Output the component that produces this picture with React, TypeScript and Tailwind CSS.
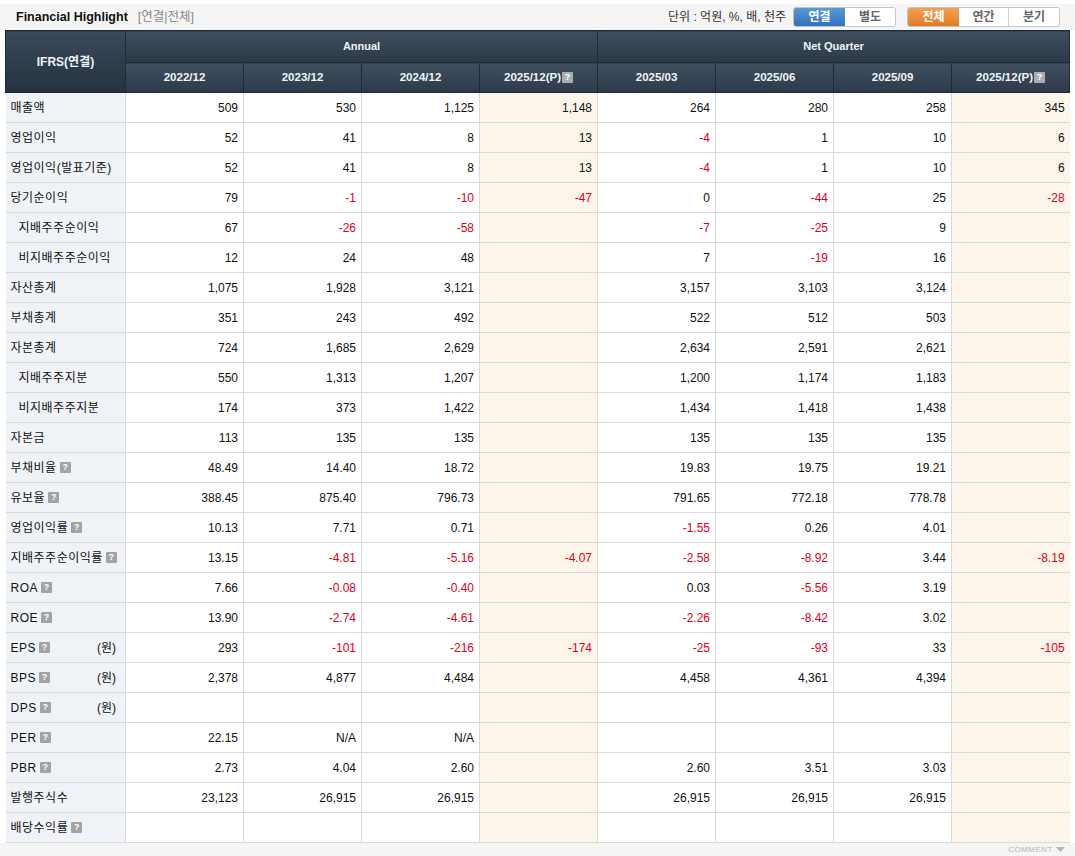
import React from "react";

type Row = {
  label: string;
  indent?: boolean;
  help?: boolean;
  unit?: string;
  values: string[];
};

const rows: Row[] = [
  { label: "매출액", values: ["509", "530", "1,125", "1,148", "264", "280", "258", "345"] },
  { label: "영업이익", values: ["52", "41", "8", "13", "-4", "1", "10", "6"] },
  { label: "영업이익(발표기준)", values: ["52", "41", "8", "13", "-4", "1", "10", "6"] },
  { label: "당기순이익", values: ["79", "-1", "-10", "-47", "0", "-44", "25", "-28"] },
  { label: "지배주주순이익", indent: true, values: ["67", "-26", "-58", "", "-7", "-25", "9", ""] },
  { label: "비지배주주순이익", indent: true, values: ["12", "24", "48", "", "7", "-19", "16", ""] },
  { label: "자산총계", values: ["1,075", "1,928", "3,121", "", "3,157", "3,103", "3,124", ""] },
  { label: "부채총계", values: ["351", "243", "492", "", "522", "512", "503", ""] },
  { label: "자본총계", values: ["724", "1,685", "2,629", "", "2,634", "2,591", "2,621", ""] },
  { label: "지배주주지분", indent: true, values: ["550", "1,313", "1,207", "", "1,200", "1,174", "1,183", ""] },
  { label: "비지배주주지분", indent: true, values: ["174", "373", "1,422", "", "1,434", "1,418", "1,438", ""] },
  { label: "자본금", values: ["113", "135", "135", "", "135", "135", "135", ""] },
  { label: "부채비율", help: true, values: ["48.49", "14.40", "18.72", "", "19.83", "19.75", "19.21", ""] },
  { label: "유보율", help: true, values: ["388.45", "875.40", "796.73", "", "791.65", "772.18", "778.78", ""] },
  { label: "영업이익률", help: true, values: ["10.13", "7.71", "0.71", "", "-1.55", "0.26", "4.01", ""] },
  { label: "지배주주순이익률", help: true, values: ["13.15", "-4.81", "-5.16", "-4.07", "-2.58", "-8.92", "3.44", "-8.19"] },
  { label: "ROA", help: true, values: ["7.66", "-0.08", "-0.40", "", "0.03", "-5.56", "3.19", ""] },
  { label: "ROE", help: true, values: ["13.90", "-2.74", "-4.61", "", "-2.26", "-8.42", "3.02", ""] },
  { label: "EPS", help: true, unit: "(원)", values: ["293", "-101", "-216", "-174", "-25", "-93", "33", "-105"] },
  { label: "BPS", help: true, unit: "(원)", values: ["2,378", "4,877", "4,484", "", "4,458", "4,361", "4,394", ""] },
  { label: "DPS", help: true, unit: "(원)", values: ["", "", "", "", "", "", "", ""] },
  { label: "PER", help: true, values: ["22.15", "N/A", "N/A", "", "", "", "", ""] },
  { label: "PBR", help: true, values: ["2.73", "4.04", "2.60", "", "2.60", "3.51", "3.03", ""] },
  { label: "발행주식수", values: ["23,123", "26,915", "26,915", "", "26,915", "26,915", "26,915", ""] },
  { label: "배당수익률", help: true, values: ["", "", "", "", "", "", "", ""] },
];

const periods = ["2022/12", "2023/12", "2024/12", "2025/12(P)", "2025/03", "2025/06", "2025/09", "2025/12(P)"];

const HelpIcon = ({ light }: { light?: boolean }) => (
  <span
    className={`inline-flex h-[11px] w-[11px] shrink-0 items-center justify-center rounded-[1px] text-[9px] font-bold leading-none tracking-normal text-white ${
      light ? "bg-[#a9adb2]" : "bg-[#a3a3a3]"
    }`}
  >
    ?
  </span>
);

const App: React.FC = () => {
  return (
    <div
      className="w-[1075px] bg-white text-[12px] text-[#222]"
      style={{ fontFamily: '"Liberation Sans", "Noto Sans CJK KR", sans-serif' }}
    >
      {/* title bar */}
      <div className="mt-[4px] flex h-[26px] items-center justify-between bg-[#f5f5f5] pl-[16px] pr-[15px]">
        <div className="flex items-center gap-[10px]">
          <span className="text-[12.5px] font-bold text-[#111]">Financial Highlight</span>
          <span className="text-[12.5px] text-[#888]">[연결|전체]</span>
        </div>
        <div className="flex items-center">
          <span className="mr-[7px] text-[12px] text-[#333]">단위 : 억원, %, 배, 천주</span>
          <div className="flex h-[20px] overflow-hidden rounded-[3px] border border-[#c4c4c4] text-[12px] font-bold">
            <span className="flex w-[51px] items-center justify-center bg-gradient-to-b from-[#5b9ad6] to-[#2f72b8] text-white">연결</span>
            <span className="flex w-[50px] items-center justify-center bg-white text-[#666]">별도</span>
          </div>
          <div className="ml-[11px] flex h-[20px] overflow-hidden rounded-[3px] border border-[#c4c4c4] text-[12px] font-bold">
            <span className="flex w-[51px] items-center justify-center bg-gradient-to-b from-[#f3a152] to-[#e07c22] text-white">전체</span>
            <span className="flex w-[50px] items-center justify-center border-r border-[#d0d0d0] bg-white text-[#666]">연간</span>
            <span className="flex w-[50px] items-center justify-center bg-white text-[#666]">분기</span>
          </div>
        </div>
      </div>

      {/* table */}
      <div className="px-[5px]">
        <table className="w-[1064px] table-fixed border-collapse">
          <colgroup>
            <col className="w-[120px]" />
            {periods.map((p, i) => (
              <col key={i} className="w-[118px]" />
            ))}
          </colgroup>
          <thead>
            <tr className="h-[32px]">
              <th
                rowSpan={2}
                className="border border-[#1e2a36] bg-gradient-to-b from-[#3b4a5a] to-[#243241] text-[12px] font-bold text-[#eef3f8]"
              >
                IFRS(연결)
              </th>
              <th
                colSpan={4}
                className="border border-[#1e2a36] border-l-[#5a6877] bg-gradient-to-b from-[#3f4e5e] to-[#2b3948] text-[11px] font-bold text-[#eef3f8]"
              >
                Annual
              </th>
              <th
                colSpan={4}
                className="border border-[#1e2a36] border-l-[#5a6877] bg-gradient-to-b from-[#3f4e5e] to-[#2b3948] text-[11px] font-bold text-[#eef3f8]"
              >
                Net Quarter
              </th>
            </tr>
            <tr className="h-[30px]">
              {periods.map((p, i) => (
                <th
                  key={i}
                  className="border border-[#1e2a36] border-l-[#5a6877] border-t-[#5a6877] bg-gradient-to-b from-[#405061] to-[#2c3a49] text-[11.5px] font-bold text-[#eef3f8]"
                >
                  <span className="inline-flex items-center gap-[1px]">
                    {p}
                    {p.includes("(P)") && <HelpIcon light />}
                  </span>
                </th>
              ))}
            </tr>
          </thead>
          <tbody>
            {rows.map((r, ri) => (
              <tr key={ri} className="h-[30px]">
                <td className="h-[30px] overflow-hidden whitespace-nowrap border border-[#d9d9d9] border-l-0 bg-[#eff2f7] p-0 text-[12px] text-[#111]">
                  <div className={`flex items-center justify-between pr-[9px] ${r.indent ? "pl-[13px]" : "pl-[5px]"}`}>
                    <span className="flex items-center gap-[3px] tracking-[0.5px]">
                      {r.label}
                      {r.help && <HelpIcon />}
                    </span>
                    {r.unit && <span>{r.unit}</span>}
                  </div>
                </td>
                {r.values.map((v, vi) => (
                  <td
                    key={vi}
                    className={`h-[30px] border border-[#d9d9d9] pr-[5px] text-right text-[12px] ${
                      vi === 3 || vi === 7 ? "bg-[#fdf5e9]" : "bg-white"
                    } ${v.startsWith("-") ? "text-[#e0001a]" : "text-[#111]"} ${vi === 7 ? "border-r-0" : ""}`}
                  >
                    {v}
                  </td>
                ))}
              </tr>
            ))}
          </tbody>
        </table>
      </div>

      {/* footer */}
      <div className="flex h-[14px] items-center justify-end bg-[#f5f5f5] pr-[10px]">
        <span className="flex items-center gap-[3px] text-[8px] tracking-[0.5px] text-[#b5b5b5]">
          COMMENT
          <svg width="9" height="6" viewBox="0 0 9 6">
            <path d="M0 0 H9 L4.5 5 Z" fill="#b5b5b5" />
          </svg>
        </span>
      </div>
    </div>
  );
};

export default App;
